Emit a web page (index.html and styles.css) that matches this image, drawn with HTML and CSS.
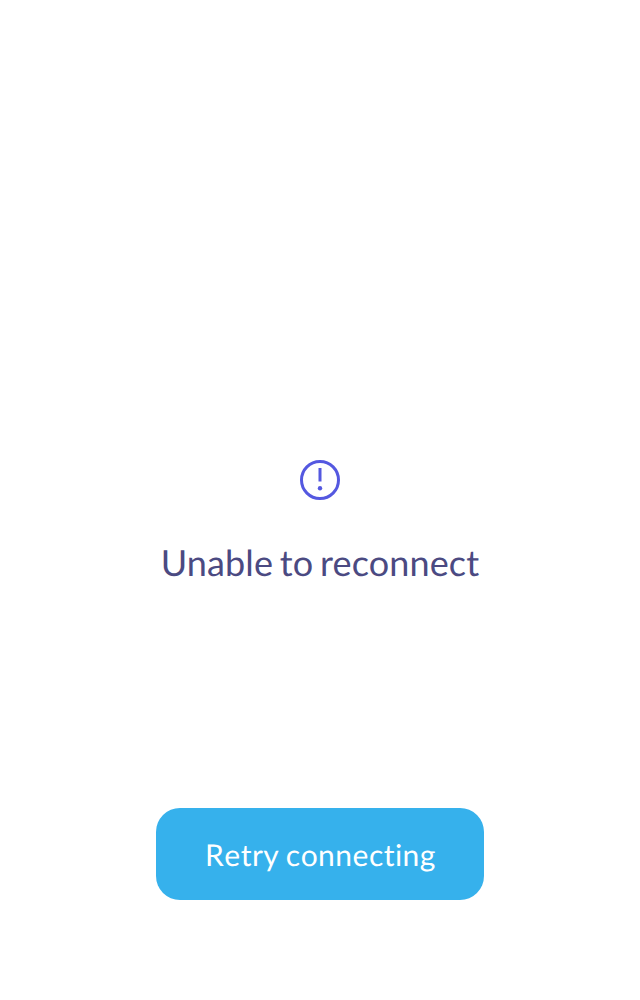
FILE: index.html
```html
<!DOCTYPE html>
<html lang="en">
<head>
<meta charset="utf-8">
<title>Unable to reconnect</title>
<link rel="stylesheet" href="styles.css">
</head>
<body>
<main class="screen">
  <section class="status">
    <svg class="status-icon" viewBox="0 0 40 40" aria-hidden="true">
      <circle cx="20" cy="20" r="18.5" fill="none" stroke="currentColor" stroke-width="3"/>
      <rect x="18.5" y="8" width="3" height="13.5" fill="currentColor"/>
      <circle cx="20" cy="28.2" r="2.2" fill="currentColor"/>
    </svg>
    <h1 class="status-title">Unable to reconnect</h1>
  </section>
  <button class="retry" type="button">Retry connecting</button>
</main>
</body>
</html>
```
FILE: styles.css
```css
body {
  margin: 0;
  background: #fff;
  font-family: Lato, sans-serif;
}

.screen {
  box-sizing: border-box;
  height: 1000px;
  padding: 460px 0 100px;
  display: flex;
  flex-direction: column;
  align-items: center;
  justify-content: space-between;
}

.status {
  display: flex;
  flex-direction: column;
  align-items: center;
  gap: 38px;
}

.status-icon {
  width: 40px;
  height: 40px;
  color: #5458e0;
}

.status-title {
  margin: 0;
  color: #4b4a82;
  font-size: 36px;
  line-height: 48px;
  font-weight: 400;
  letter-spacing: 0.13px;
  word-spacing: -2.6px;
  text-rendering: geometricPrecision;
}

.retry {
  width: 328px;
  height: 92px;
  padding: 2px 0 0 1px;
  border: 0;
  border-radius: 24px;
  background: #36b1ec;
  color: #fff;
  font: 400 30px/40px Lato, sans-serif;
  letter-spacing: 0.48px;
  word-spacing: -1.6px;
  font-kerning: none;
  text-rendering: geometricPrecision;
}
```
